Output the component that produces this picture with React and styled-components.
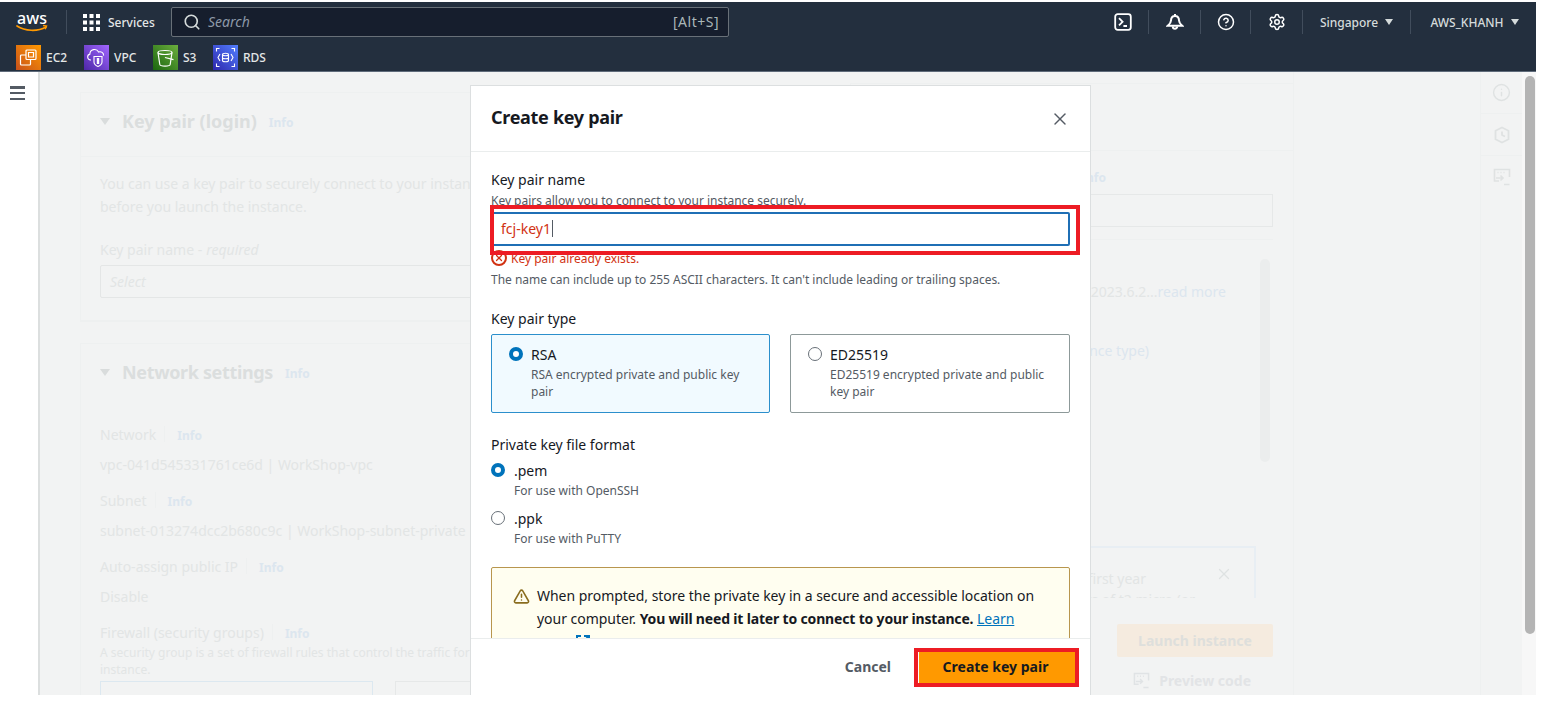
import styled, { createGlobalStyle } from 'styled-components';
import { Search, X, CircleHelp, Settings, Info, TriangleAlert } from 'lucide-react';

const FONT = `"Noto Sans", Roboto, sans-serif`;
const DIM_TEXT = '#e2e5e5';
const DIM_TITLE = '#dbdede';
const DIM_LINK = '#dce6ef';
const DIM_LINE = '#eef0f0';

const GlobalStyle = createGlobalStyle`
  html, body { margin: 0; padding: 0; background: #fff; }
  body { font-family: ${FONT}; font-size: 14px; color: #16191f; }
  * { box-sizing: border-box; }
`;

const Page = styled.div`
  width: 1544px;
  height: 712px;
  padding: 2px 8px 0 0;
  overflow: hidden;
`;

const Shell = styled.div`
  position: relative;
  width: 1536px;
  height: 693px;
  display: flex;
  flex-direction: column;
`;

const Header = styled.header`
  height: 70px;
  flex: none;
  background: #232f3e;
  border-bottom: 1px solid #5f6b7a;
  color: #d5dbdb;
`;

const TopBar = styled.div`
  height: 40px;
  display: flex;
  align-items: center;
  padding-left: 16px;
`;

const LogoDivider = styled.span`
  width: 1px;
  height: 24px;
  margin: 0 16px 0 18px;
  background: #414d5c;
`;

const ServicesLink = styled.div`
  width: 88px;
  display: flex;
  align-items: center;
  gap: 8px;
  font-size: 12px;
  font-weight: 500;
  color: #e3e7e7;
`;

const SearchBox = styled.div`
  width: 558px;
  height: 30px;
  display: flex;
  align-items: center;
  gap: 7px;
  padding: 0 9px 1px 11px;
  background: #161e2d;
  border: 1px solid #687078;
  border-radius: 2px;
  color: #d5dbdb;
`;

const SearchHint = styled.span`
  flex: 1;
  font-size: 14px;
  font-style: italic;
  color: #8d99a8;
`;

const Shortcut = styled.span`
  font-size: 14px;
  letter-spacing: 0.5px;
  color: #aab7b8;
`;

const NavRight = styled.div`
  margin-left: auto;
  display: flex;
  align-items: center;
`;

const NavCell = styled.div`
  width: ${(p) => p.$w}px;
  height: 24px;
  display: flex;
  align-items: center;
  justify-content: center;
  gap: 6px;
  font-size: 12px;
  font-weight: 500;
  border-right: ${(p) => (p.$last ? 'none' : '1px solid #414d5c')};
  padding-left: ${(p) => p.$pad || 0}px;
`;

const Caret = styled.span`
  width: 0;
  height: 0;
  margin-left: ${(p) => p.$gap || 0}px;
  border-left: 4.5px solid transparent;
  border-right: 4.5px solid transparent;
  border-top: 6px solid currentColor;
`;

const Favorites = styled.div`
  display: flex;
  align-items: center;
  padding: 3px 0 0 16px;
`;

const Favorite = styled.div`
  width: ${(p) => p.$w}px;
  display: flex;
  align-items: center;
  gap: 5px;
  font-size: 12px;
  font-weight: 500;
  color: #e3e7e7;
`;

const ServiceTile = styled.span`
  width: 25px;
  height: 25px;
  flex: none;
  display: flex;
  align-items: center;
  justify-content: center;
  background: linear-gradient(45deg, ${(p) => p.$from}, ${(p) => p.$to});
`;

const Body = styled.div`
  flex: 1;
  min-height: 0;
  display: flex;
  overflow: hidden;
  background: #f2f3f3;
`;

const Sidebar = styled.aside`
  width: 40px;
  flex: none;
  padding: 14px 0 0 10px;
  background: #fff;
  border-right: 2px solid #dcdfdf;
`;

const MenuBars = styled.div`
  width: 15px;
  height: 14px;
  display: flex;
  flex-direction: column;
  justify-content: space-between;

  span {
    height: 2.5px;
    background: #545b64;
  }
`;

const Content = styled.main`
  width: 1254px;
  flex: none;
  display: flex;
  gap: 20px;
  padding: 11px 0 0 40px;
  border-right: 1px solid ${DIM_LINE};
`;

const LeftColumn = styled.div`
  width: 750px;
  flex: none;
  padding-top: 9px;
`;

const Card = styled.section`
  margin-bottom: 21px;
  border: 1px solid ${DIM_LINE};
  border-bottom-width: 2px;
`;

const CardHead = styled.div`
  height: ${(p) => p.$h}px;
  display: flex;
  align-items: flex-start;
  padding: 16px 19px 0;
  border-bottom: ${(p) => (p.$line ? `1px solid ${DIM_LINE}` : 'none')};
`;

const FoldCaret = styled.span`
  width: 0;
  height: 0;
  margin: 9px 12px 0 0;
  border-left: 5px solid transparent;
  border-right: 5px solid transparent;
  border-top: 7px solid #d9dcdc;
`;

const CardTitle = styled.h2`
  margin: 0 12px 0 0;
  font-size: 18px;
  line-height: 24px;
  font-weight: 700;
  letter-spacing: ${(p) => p.$tracking || 0}px;
  color: ${DIM_TITLE};
`;

const InfoLink = styled.span`
  font-size: 12px;
  font-weight: 700;
  line-height: 28px;
  color: ${DIM_LINK};
`;

const CardBody = styled.div`
  padding: ${(p) => p.$top}px 19px ${(p) => p.$bottom || 0}px;
  color: ${DIM_TEXT};
  white-space: nowrap;
`;

const Paragraph = styled.p`
  margin: 0;
  line-height: 23px;
`;

const DimLabel = styled.div`
  display: flex;
  align-items: center;
  height: 20px;
  margin-top: ${(p) => p.$top || 0}px;

  em {
    margin-left: 4px;
  }

  ${InfoLink} {
    margin-top: 3px;
  }
`;

const LabelRule = styled.span`
  width: 1px;
  height: 16px;
  margin: 0 12px 0 8px;
  background: ${DIM_LINE};
`;

const DimValue = styled.div`
  height: 20px;
  margin: 11px 0 15px;
`;

const DimHelp = styled.div`
  margin-top: 2px;
  font-size: 12px;
  line-height: 17px;
`;

const DimSelect = styled.div`
  height: 33px;
  margin-top: 6px;
  padding: 0 9px;
  display: flex;
  align-items: center;
  font-style: italic;
  color: #e2e5e5;
  border: 1px solid #e4e6e6;
  border-radius: 2px;
`;

const FirewallRow = styled.div`
  display: flex;
  gap: 22px;
  margin-top: 3px;
`;

const FirewallBox = styled.div`
  width: 273px;
  height: 40px;
  border: 1px solid ${(p) => p.$tone};
`;

const SummaryPanel = styled.aside`
  flex: 1;
  display: flex;
  flex-direction: column;
  border-left: 1px solid ${DIM_LINE};
  border-top: 1px solid ${DIM_LINE};
  color: ${DIM_TEXT};
`;

const PanelHead = styled.div`
  height: 67px;
  flex: none;
  border-bottom: 1px solid ${DIM_LINE};
`;

const PanelBody = styled.div`
  display: flex;
  flex-direction: column;
  padding: 0 20px;
`;

const PanelLabel = styled.div`
  height: 20px;
  margin-top: 16px;
  padding-right: 167px;
  line-height: 20px;
  text-align: right;
  white-space: nowrap;

  span {
    line-height: 20px;
  }
`;

const PanelInput = styled.div`
  height: 33px;
  margin-top: 7px;
  border: 1px solid #e6e8e8;
`;

const PanelRule = styled.div`
  height: 1px;
  margin-top: 12px;
  background: ${DIM_LINE};
`;

const ScrollRow = styled.div`
  height: 358px;
  display: flex;
  overflow: hidden;
`;

const ScrollBody = styled.div`
  flex: 1;
  min-width: 0;
  padding: 42px 4px 0 0;
`;

const SummaryLine = styled.div`
  height: 20px;
  margin-bottom: ${(p) => p.$gap}px;
  padding-right: ${(p) => p.$right}px;
  text-align: right;
  white-space: nowrap;

  span {
    color: ${DIM_LINK};
  }
`;

const ThinThumb = styled.div`
  width: 10px;
  height: 203px;
  margin: 19px 3px 0 0;
  border-radius: 5px;
  background: #ebeded;
`;

const FreeTierNotice = styled.div`
  position: relative;
  height: 80px;
  padding-top: 20px;
  border: 2px solid #e8eef3;
  font-size: 14px;
  line-height: 21px;
  text-align: right;
  white-space: nowrap;
`;

const NoticeLine = styled.div`
  padding-right: ${(p) => p.$right}px;
`;

const NoticeClose = styled.span`
  position: absolute;
  top: 17px;
  right: 21px;
  display: flex;
  color: #dfe2e2;
`;

const LaunchButton = styled.div`
  width: 156px;
  height: 33px;
  align-self: flex-end;
  margin-top: 26px;
  display: flex;
  align-items: center;
  justify-content: center;
  border-radius: 2px;
  background: #f5ebdf;
  color: #dedfdc;
  font-weight: 700;
`;

const PreviewCode = styled.div`
  align-self: flex-end;
  margin: 14px 22px 0 0;
  display: flex;
  align-items: center;
  gap: 9px;
  color: #e2e4e6;
  font-weight: 700;
`;

const Gutter = styled.div`
  flex: 1;
`;

const Rail = styled.div`
  width: 42px;
  flex: none;
  border-left: 1px solid ${DIM_LINE};
`;

const RailItem = styled.div`
  height: 42px;
  display: flex;
  align-items: center;
  justify-content: center;
  border-bottom: ${(p) => (p.$line ? `1px solid ${DIM_LINE}` : 'none')};
  color: #dfe2e2;
`;

const PageTrack = styled.div`
  width: 14px;
  flex: none;
  padding: 4px 1px 0 3px;
  background: #f7f7f7;
`;

const PageThumb = styled.div`
  height: 558px;
  border-radius: 5px;
  background: #b4b4b4;
`;

const Modal = styled.div`
  position: absolute;
  top: 83px;
  left: 470px;
  width: 621px;
  height: 610px;
  display: flex;
  flex-direction: column;
  background: #fff;
  border: 1px solid #dcdfe0;
  border-bottom: none;
`;

const ModalHead = styled.div`
  height: 66px;
  flex: none;
  display: flex;
  align-items: center;
  justify-content: space-between;
  padding: 0 20px;
  border-bottom: 1px solid #eaeded;
`;

const ModalTitle = styled.h1`
  margin: 0 0 4px;
  font-size: 18px;
  font-weight: 700;
  letter-spacing: -0.3px;
`;

const CloseButton = styled.span`
  display: flex;
  color: #545b64;
`;

const ModalBody = styled.div`
  flex: 1;
  min-height: 0;
  overflow: hidden;
  padding: 18px 20px 0;
`;

const FieldLabel = styled.div`
  font-size: 14px;
  line-height: 20px;
  margin-top: ${(p) => p.$top || 0}px;
`;

const HelpText = styled.div`
  font-size: 12px;
  line-height: 16px;
  letter-spacing: -0.02px;
  color: #545b64;
  margin-top: ${(p) => p.$top || 0}px;
`;

const InputWrap = styled.div`
  position: relative;
  margin-top: 3px;
`;

const NameInput = styled.div`
  height: 34px;
  display: flex;
  align-items: center;
  padding: 0 0 2px 8px;
  border: 2px solid #1f6fb5;
  border-radius: 2px;
  color: #d13212;
  font-size: 14px;
`;

const TextCursor = styled.span`
  width: 1px;
  height: 17px;
  margin-left: 1px;
  background: #545b64;
`;

const RedFrame = styled.span`
  position: absolute;
  pointer-events: none;
  top: ${(p) => p.$top}px;
  right: ${(p) => p.$right}px;
  bottom: ${(p) => p.$bottom}px;
  left: ${(p) => p.$left}px;
  border: 4px solid #ed1c24;
`;

const ErrorRow = styled.div`
  display: flex;
  align-items: center;
  gap: 4px;
  margin-top: 4px;
  height: 16px;
  font-size: 12px;
  color: #d13212;
`;

const ErrorBadge = styled.span`
  width: 16px;
  height: 16px;
  flex: none;
  display: flex;
  align-items: center;
  justify-content: center;
  border: 2px solid #d13212;
  border-radius: 50%;
`;

const TileRow = styled.div`
  display: grid;
  grid-template-columns: 279px 280px;
  gap: 20px;
  margin-top: 5px;
`;

const Tile = styled.div`
  height: 79px;
  display: flex;
  gap: 8px;
  padding: 9px 12px 0 17px;
  background: ${(p) => (p.$selected ? '#f1faff' : '#fff')};
  border: 1px solid ${(p) => (p.$selected ? '#2b8fcc' : '#8d9999')};
  border-radius: 2px;
`;

const Radio = styled.span`
  width: 14px;
  height: 14px;
  flex: none;
  margin-top: 3px;
  border-radius: 50%;
  background: #fff;
  border: ${(p) => (p.$checked ? '4px solid #0073bb' : '1px solid #687078')};
`;

const OptionLabel = styled.div`
  padding-top: 1px;
  font-size: 14px;
  line-height: 20px;
`;

const OptionHelp = styled.div`
  font-size: 12px;
  line-height: 17px;
  color: #545b64;
  margin-top: 1px;
`;

const FormatOption = styled.div`
  display: flex;
  gap: 9px;
  margin-top: ${(p) => p.$top}px;
`;

const Warning = styled.div`
  display: flex;
  gap: 7px;
  margin-top: 20px;
  padding: 16px 21px 0;
  background: #fffef0;
  border: 1px solid #b8964e;
  border-radius: 2px;
  line-height: 23px;
  letter-spacing: -0.03px;

  strong {
    letter-spacing: -0.17px;
  }
`;

const WarningIcon = styled.span`
  display: flex;
  flex: none;
  margin-top: 4px;
  color: #8a6d1f;
`;

const LearnLink = styled.a`
  color: #0073bb;
  text-decoration: underline;
`;

const ModalFoot = styled.div`
  height: 57px;
  flex: none;
  display: flex;
  align-items: center;
  justify-content: flex-end;
  padding: 1px 15px 0 0;
  border-top: 1px solid #eaeded;
`;

const CancelButton = styled.span`
  margin: 0 28px 3px 0;
  color: #545b64;
  font-weight: 700;
`;

const ConfirmWrap = styled.div`
  position: relative;
  display: flex;
`;

const ConfirmButton = styled.span`
  width: 156px;
  height: 31px;
  display: flex;
  align-items: center;
  justify-content: center;
  padding: 0 3px 3px 0;
  background: #ff9900;
  color: #16191f;
  font-weight: 700;
`;

const AwsLogo = () => (
  <svg width="32" height="22" viewBox="0 0 32 22">
    <text x="16" y="13" textAnchor="middle" fontFamily={FONT} fontSize="16" fontWeight="500" fill="#fff">
      aws
    </text>
    <path d="M1 15c8 5 20 6 29 1" fill="none" stroke="#ff9900" strokeWidth="1.7" strokeLinecap="round" />
    <path d="M27 14.5l3.6.6-1.4 3.2" fill="none" stroke="#ff9900" strokeWidth="1.3" />
  </svg>
);

const GridIcon = () => (
  <svg width="17" height="17" viewBox="0 0 17 17" fill="#fff">
    {[0, 6.5, 13].flatMap((y) =>
      [0, 6.5, 13].map((x) => <rect key={`${x}-${y}`} x={x} y={y} width="4" height="4" />)
    )}
  </svg>
);

const TerminalIcon = () => (
  <svg width="18" height="18" viewBox="0 0 18 18" fill="none" stroke="#fff" strokeWidth="1.8">
    <rect x="1.2" y="1.2" width="15.6" height="15.6" rx="2.5" />
    <path d="M5 5.2l3.6 3.6L5 12.4M9.4 13h3.6" />
  </svg>
);

const BellIcon = () => (
  <svg width="18" height="18" viewBox="0 0 18 18" fill="none" stroke="#fff" strokeWidth="2">
    <path d="M9 1v2M9 3c-2.8 0-4 2.2-4 4.6 0 2.2-1.4 3.6-3.2 5.2h14.4C14.4 11.2 13 9.8 13 7.6 13 5.2 11.8 3 9 3z" />
    <path d="M6.8 13.5a2.2 2.2 0 0 0 4.4 0" />
  </svg>
);

const Ec2Icon = () => (
  <svg width="19" height="19" viewBox="0 0 19 19" fill="none" stroke="#fff" strokeWidth="1.2">
    <rect x="7" y="2" width="10" height="9.5" rx="1" />
    <path d="M7 7H2.5a1 1 0 0 0-1 1v8a1 1 0 0 0 1 1h8a1 1 0 0 0 1-1v-4.5" />
    <path d="M9.5 4.5h5v4.5h-5z" />
  </svg>
);

const VpcIcon = () => (
  <svg width="21" height="21" viewBox="0 0 21 21" fill="none" stroke="#fff" strokeWidth="1.1">
    <path d="M5 13H4.5a3 3 0 0 1-.6-5.9A4.6 4.6 0 0 1 12.6 5a3.6 3.6 0 0 1 5 3.6" />
    <path d="M8 9.5h8v5.5c0 2.5-2 3.6-4 4.5-2-.9-4-2-4-4.5z" />
    <path d="M12 11v6" strokeWidth="2.4" />
  </svg>
);

const S3Icon = () => (
  <svg width="20" height="20" viewBox="0 0 20 20" fill="none" stroke="#fff" strokeWidth="1.2">
    <ellipse cx="9" cy="4.5" rx="7" ry="2" />
    <path d="M2 4.5l1.8 12c.2 1 2.5 1.6 5.2 1.6s5-.6 5.2-1.6L16 4.5" />
    <path d="M9 9.5l8.5 2.2" />
  </svg>
);

const RdsIcon = () => (
  <svg width="21" height="21" viewBox="0 0 21 21" fill="none" stroke="#fff" strokeWidth="1.1">
    <ellipse cx="10.5" cy="7.5" rx="3" ry="1.3" />
    <path d="M7.5 7.5v6c0 .8 1.4 1.3 3 1.3s3-.5 3-1.3v-6M7.5 10.5c0 .8 1.4 1.3 3 1.3s3-.5 3-1.3" />
    <path d="M1.5 4.5v-3h3M16.5 1.5h3v3M19.5 16.5v3h-3M4.5 19.5h-3v-3" />
    <path d="M5 7L3 10.5 5 14M16 7l2 3.5L16 14" />
  </svg>
);

const ExternalGlyph = () => (
  <svg width="14" height="14" viewBox="0 0 14 14" fill="none" stroke="#0073bb" strokeWidth="2" style={{ verticalAlign: '-2px', marginLeft: 4 }}>
    <path d="M5 1H1v12h12V9M8 1h5v5M13 1L6 8" />
  </svg>
);

const CodePreviewIcon = ({ color, size }) => (
  <svg width={size} height={size} viewBox="0 0 18 18" fill="none" stroke={color} strokeWidth="1.6">
    <path d="M6 13H1.5V1.5h15V9" />
    <path d="M4.5 4.5h1M7.5 4.5h1M10.5 4.5h1" />
    <path d="M3 10h7M7.5 7.5L10 10l-2.5 2.5M11 16.5h5.5" />
  </svg>
);

const ShieldClockIcon = () => (
  <svg width="18" height="18" viewBox="0 0 18 18" fill="none" stroke="currentColor" strokeWidth="1.8">
    <path d="M9 1.5l6.5 3.2v8.6L9 16.5l-6.5-3.2V4.7z" />
    <path d="M9 5.5V9l3 1.5" />
  </svg>
);

const App = () => (
  <Page>
    <GlobalStyle />
    <Shell>
      <Header>
        <TopBar>
          <AwsLogo />
          <LogoDivider />
          <ServicesLink>
            <GridIcon />
            Services
          </ServicesLink>
          <SearchBox>
            <Search size={18} strokeWidth={2.2} />
            <SearchHint>Search</SearchHint>
            <Shortcut>[Alt+S]</Shortcut>
          </SearchBox>
          <NavRight>
            <NavCell $w={51}>
              <TerminalIcon />
            </NavCell>
            <NavCell $w={52}>
              <BellIcon />
            </NavCell>
            <NavCell $w={50}>
              <CircleHelp size={18} color="#fff" strokeWidth={2} />
            </NavCell>
            <NavCell $w={52}>
              <Settings size={18} color="#fff" strokeWidth={2} />
            </NavCell>
            <NavCell $w={108}>
              Singapore
              <Caret $gap={1} />
            </NavCell>
            <NavCell $w={125} $last $pad={2}>
              AWS_KHANH
              <Caret $gap={1} />
            </NavCell>
          </NavRight>
        </TopBar>
        <Favorites>
          <Favorite $w={68}>
            <ServiceTile $from="#c8511b" $to="#ff9900">
              <Ec2Icon />
            </ServiceTile>
            EC2
          </Favorite>
          <Favorite $w={69}>
            <ServiceTile $from="#4d27a8" $to="#a166ff">
              <VpcIcon />
            </ServiceTile>
            VPC
          </Favorite>
          <Favorite $w={60}>
            <ServiceTile $from="#1b660f" $to="#6cae3e">
              <S3Icon />
            </ServiceTile>
            S3
          </Favorite>
          <Favorite $w={60}>
            <ServiceTile $from="#2e27ad" $to="#527fff">
              <RdsIcon />
            </ServiceTile>
            RDS
          </Favorite>
        </Favorites>
      </Header>

      <Body>
        <Sidebar>
          <MenuBars>
            <span />
            <span />
            <span />
          </MenuBars>
        </Sidebar>

        <Content>
          <LeftColumn>
            <Card>
              <CardHead $h={64} $line>
                <FoldCaret />
                <CardTitle>Key pair (login)</CardTitle>
                <InfoLink>Info</InfoLink>
              </CardHead>
              <CardBody $top={15} $bottom={22}>
                <Paragraph>
                  You can use a key pair to securely connect to your instance. Ensure that you have access to the selected key pair
                  <br />
                  before you launch the instance.
                </Paragraph>
                <DimLabel $top={21}>
                  Key pair name - <em>required</em>
                </DimLabel>
                <DimSelect>Select</DimSelect>
              </CardBody>
            </Card>
            <Card>
              <CardHead $h={64}>
                <FoldCaret />
                <CardTitle $tracking={-0.35}>Network settings</CardTitle>
                <InfoLink>Info</InfoLink>
              </CardHead>
              <CardBody $top={16}>
                <DimLabel>
                  Network
                  <LabelRule />
                  <InfoLink>Info</InfoLink>
                </DimLabel>
                <DimValue>vpc-041d545331761ce6d | WorkShop-vpc</DimValue>
                <DimLabel>
                  Subnet
                  <LabelRule />
                  <InfoLink>Info</InfoLink>
                </DimLabel>
                <DimValue>subnet-013274dcc2b680c9c | WorkShop-subnet-private</DimValue>
                <DimLabel>
                  Auto-assign public IP
                  <LabelRule />
                  <InfoLink>Info</InfoLink>
                </DimLabel>
                <DimValue>Disable</DimValue>
                <DimLabel>
                  Firewall (security groups)
                  <LabelRule />
                  <InfoLink>Info</InfoLink>
                </DimLabel>
                <DimHelp>
                  A security group is a set of firewall rules that control the traffic for your
                  <br />
                  instance.
                </DimHelp>
                <FirewallRow>
                  <FirewallBox $tone="#dce8f0" />
                  <FirewallBox $tone="#e6e8e8" />
                </FirewallRow>
              </CardBody>
            </Card>
          </LeftColumn>

          <SummaryPanel>
            <PanelHead />
            <PanelBody>
              <PanelLabel>
                <InfoLink>Info</InfoLink>
              </PanelLabel>
              <PanelInput />
              <PanelRule />
              <ScrollRow>
                <ScrollBody>
                  <SummaryLine $gap={39} $right={30}>
                    Amazon Linux 2023 AMI 2023.6.2...<span>read more</span>
                  </SummaryLine>
                  <SummaryLine $gap={185} $right={107}>
                    <span>t2.micro (instance type)</span>
                  </SummaryLine>
                  <FreeTierNotice>
                    <NoticeClose>
                      <X size={18} strokeWidth={1.6} />
                    </NoticeClose>
                    <NoticeLine $right={108}>Free tier: In your first year</NoticeLine>
                    <NoticeLine $right={59}>includes 750 hours of t2.micro (or</NoticeLine>
                  </FreeTierNotice>
                </ScrollBody>
                <ThinThumb />
              </ScrollRow>
              <LaunchButton>Launch instance</LaunchButton>
              <PreviewCode>
                <CodePreviewIcon color="#e0e3e5" size={17} />
                Preview code
              </PreviewCode>
            </PanelBody>
          </SummaryPanel>
        </Content>

        <Gutter />

        <Rail>
          <RailItem $line>
            <Info size={19} strokeWidth={1.8} />
          </RailItem>
          <RailItem $line>
            <ShieldClockIcon />
          </RailItem>
          <RailItem>
            <CodePreviewIcon color="currentColor" size={18} />
          </RailItem>
        </Rail>
        <PageTrack>
          <PageThumb />
        </PageTrack>
      </Body>

      <Modal>
        <ModalHead>
          <ModalTitle>Create key pair</ModalTitle>
          <CloseButton>
            <X size={20} strokeWidth={1.7} />
          </CloseButton>
        </ModalHead>
        <ModalBody>
          <FieldLabel>Key pair name</FieldLabel>
          <HelpText $top={3}>Key pairs allow you to connect to your instance securely.</HelpText>
          <InputWrap>
            <NameInput>
              fcj-key1
              <TextCursor />
            </NameInput>
            <RedFrame $top={-7} $right={-10} $bottom={-9} $left={-1} />
          </InputWrap>
          <ErrorRow>
            <ErrorBadge>
              <X size={10} color="#d13212" strokeWidth={3} />
            </ErrorBadge>
            Key pair already exists.
          </ErrorRow>
          <HelpText $top={6}>The name can include up to 255 ASCII characters. It can't include leading or trailing spaces.</HelpText>

          <FieldLabel $top={21}>Key pair type</FieldLabel>
          <TileRow>
            <Tile $selected>
              <Radio $checked />
              <div>
                <OptionLabel>RSA</OptionLabel>
                <OptionHelp>
                  RSA encrypted private and public key
                  <br />
                  pair
                </OptionHelp>
              </div>
            </Tile>
            <Tile>
              <Radio />
              <div>
                <OptionLabel>ED25519</OptionLabel>
                <OptionHelp>
                  ED25519 encrypted private and public
                  <br />
                  key pair
                </OptionHelp>
              </div>
            </Tile>
          </TileRow>

          <FieldLabel $top={22}>Private key file format</FieldLabel>
          <FormatOption $top={5}>
            <Radio $checked />
            <div>
              <OptionLabel>.pem</OptionLabel>
              <OptionHelp>For use with OpenSSH</OptionHelp>
            </div>
          </FormatOption>
          <FormatOption $top={9}>
            <Radio />
            <div>
              <OptionLabel>.ppk</OptionLabel>
              <OptionHelp>For use with PuTTY</OptionHelp>
            </div>
          </FormatOption>

          <Warning>
            <WarningIcon>
              <TriangleAlert size={17} strokeWidth={2.2} />
            </WarningIcon>
            <div>
              When prompted, store the private key in a secure and accessible location on
              <br />
              your computer. <strong>You will need it later to connect to your instance.</strong> <LearnLink>Learn</LearnLink>
              <br />
              <LearnLink>more</LearnLink>
              <ExternalGlyph />
            </div>
          </Warning>
        </ModalBody>
        <ModalFoot>
          <CancelButton>Cancel</CancelButton>
          <ConfirmWrap>
            <ConfirmButton>Create key pair</ConfirmButton>
            <RedFrame $top={-4} $right={-4} $bottom={-4} $left={-5} />
          </ConfirmWrap>
        </ModalFoot>
      </Modal>
    </Shell>
  </Page>
);

export default App;
